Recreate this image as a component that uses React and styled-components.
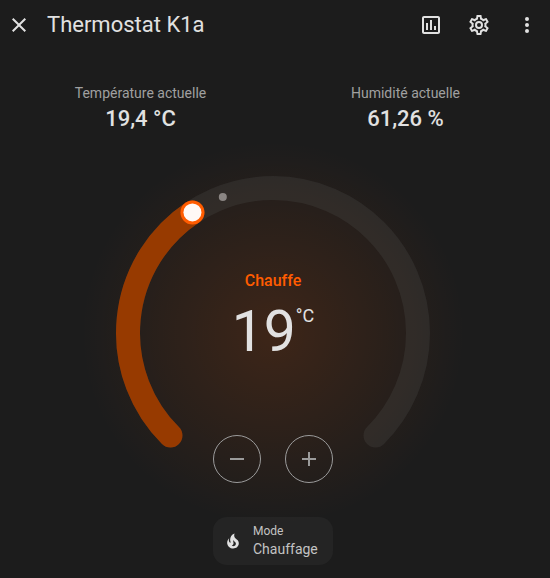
import React, { useState } from "react";
import styled, { createGlobalStyle } from "styled-components";

const GlobalStyle = createGlobalStyle`
  * { box-sizing: border-box; }
  body {
    margin: 0;
    background: #1c1c1c;
    color: #e1e1e1;
    font-family: Roboto, sans-serif;
    font-size: 14px;
  }
`;

const HEAT = "#ff5c00";

const ICONS = {
  close:
    "M19,6.41L17.59,5L12,10.59L6.41,5L5,6.41L10.59,12L5,17.59L6.41,19L12,13.41L17.59,19L19,17.59L13.41,12L19,6.41Z",
  chart:
    "M9 17H7V10H9V17M13 17H11V7H13V17M17 17H15V13H17V17M19 19H5V5H19V19.1M19 3H5C3.9 3 3 3.9 3 5V19C3 20.1 3.9 21 5 21H19C20.1 21 21 20.1 21 19V5C21 3.9 20.1 3 19 3Z",
  cog:
    "M12,8A4,4 0 0,1 16,12A4,4 0 0,1 12,16A4,4 0 0,1 8,12A4,4 0 0,1 12,8M12,10A2,2 0 0,0 10,12A2,2 0 0,0 12,14A2,2 0 0,0 14,12A2,2 0 0,0 12,10M10,22C9.75,22 9.54,21.82 9.5,21.58L9.13,18.93C8.5,18.68 7.96,18.34 7.44,17.94L4.95,18.95C4.73,19.03 4.46,18.95 4.34,18.73L2.34,15.27C2.21,15.05 2.27,14.78 2.46,14.63L4.57,12.97L4.5,12L4.57,11L2.46,9.37C2.27,9.22 2.21,8.95 2.34,8.73L4.34,5.27C4.46,5.05 4.73,4.96 4.95,5.05L7.44,6.05C7.96,5.66 8.5,5.32 9.13,5.07L9.5,2.42C9.54,2.18 9.75,2 10,2H14C14.25,2 14.46,2.18 14.5,2.42L14.87,5.07C15.5,5.32 16.04,5.66 16.56,6.05L19.05,5.05C19.27,4.96 19.54,5.05 19.66,5.27L21.66,8.73C21.79,8.95 21.73,9.22 21.54,9.37L19.43,11L19.5,12L19.43,13L21.54,14.63C21.73,14.78 21.79,15.05 21.66,15.27L19.66,18.73C19.54,18.95 19.27,19.04 19.05,18.95L16.56,17.95C16.04,18.34 15.5,18.68 14.87,18.93L14.5,21.58C14.46,21.82 14.25,22 14,22H10M11.25,4L10.88,6.61C9.68,6.86 8.62,7.5 7.85,8.39L5.44,7.35L4.69,8.65L6.8,10.2C6.4,11.37 6.4,12.64 6.8,13.8L4.68,15.36L5.43,16.66L7.86,15.62C8.63,16.5 9.68,17.14 10.87,17.38L11.24,20H12.76L13.13,17.39C14.32,17.14 15.37,16.5 16.14,15.62L18.57,16.66L19.32,15.36L17.2,13.81C17.6,12.64 17.6,11.37 17.2,10.2L19.31,8.65L18.56,7.35L16.15,8.39C15.38,7.5 14.32,6.86 13.12,6.62L12.75,4H11.25Z",
  dots:
    "M12,16A2,2 0 0,1 14,18A2,2 0 0,1 12,20A2,2 0 0,1 10,18A2,2 0 0,1 12,16M12,10A2,2 0 0,1 14,12A2,2 0 0,1 12,14A2,2 0 0,1 10,12A2,2 0 0,1 12,10M12,4A2,2 0 0,1 14,6A2,2 0 0,1 12,8A2,2 0 0,1 10,6A2,2 0 0,1 12,4Z",
  minus: "M19,13H5V11H19V13Z",
  plus: "M19,13H13V19H11V13H5V11H11V5H13V11H19V13Z",
  fire:
    "M17.66 11.2C17.43 10.9 17.15 10.64 16.89 10.38C16.22 9.78 15.46 9.35 14.82 8.72C13.33 7.26 13 4.85 13.95 3C13 3.23 12.17 3.75 11.46 4.32C8.87 6.4 7.85 10.07 9.07 13.22C9.11 13.32 9.15 13.42 9.15 13.55C9.15 13.77 9 13.97 8.8 14.05C8.57 14.15 8.33 14.09 8.14 13.93C8.08 13.88 8.04 13.83 8 13.76C6.87 12.33 6.69 10.28 7.45 8.64C5.78 10 4.87 12.3 5 14.47C5.06 14.97 5.12 15.47 5.29 15.97C5.43 16.57 5.7 17.17 6 17.7C7.08 19.43 8.95 20.67 10.96 20.92C13.1 21.19 15.39 20.8 17.03 19.32C18.86 17.66 19.5 15 18.56 12.72L18.43 12.46C18.22 12 17.66 11.2 17.66 11.2M14.5 17.5C14.22 17.74 13.76 18 13.4 18.1C12.28 18.5 11.16 17.94 10.5 17.28C11.69 17 12.4 16.12 12.61 15.23C12.78 14.43 12.46 13.77 12.33 13C12.21 12.26 12.23 11.63 12.5 10.94C12.69 11.32 12.89 11.7 13.13 12C13.9 13 15.11 13.44 15.37 14.8C15.41 14.94 15.43 15.08 15.43 15.23C15.46 16.05 15.1 16.95 14.5 17.5H14.5Z",
};

const Icon = ({ name, size = 24 }) => (
  <svg width={size} height={size} viewBox="0 0 24 24" fill="currentColor" aria-hidden="true">
    <path d={ICONS[name]} />
  </svg>
);

const Dialog = styled.main`
  display: flex;
  flex-direction: column;
  padding-right: 4px;
  overflow: hidden;
`;

const Header = styled.header`
  display: flex;
  align-items: center;
  height: 50px;
`;

const Title = styled.h1`
  flex: 1;
  margin: 0 0 0 9px;
  font-size: 22px;
  font-weight: 400;
  line-height: 28px;
`;

const IconButton = styled.button`
  display: grid;
  place-items: center;
  width: ${(p) => (p.$compact ? "38px" : "48px")};
  height: 48px;
  padding: 0;
  border: 0;
  background: none;
  color: inherit;
  cursor: pointer;
`;

const Actions = styled.div`
  display: flex;
  margin-right: -5px;
`;

const Readings = styled.dl`
  display: grid;
  grid-template-columns: 1fr 1fr;
  margin: 32px 8px 0;
  text-align: center;
`;

const Reading = styled.div`
  display: flex;
  flex-direction: column;
`;

const ReadingLabel = styled.dt`
  color: #a0a0a0;
  font-size: 14px;
  line-height: 22px;
`;

const ReadingValue = styled.dd`
  margin: 0;
  font-size: 22px;
  font-weight: 500;
  line-height: 30px;
`;

const Dial = styled.section`
  display: grid;
  align-self: center;
  width: 320px;
  margin-top: 39px;
  position: relative;
  isolation: isolate;

  &::before {
    content: "";
    position: absolute;
    z-index: -1;
    inset: -10%;
    background: radial-gradient(closest-side, ${HEAT}, transparent);
    opacity: 0.15;
    pointer-events: none;
  }
`;

const Ring = styled.svg`
  grid-area: 1 / 1;
  width: 100%;
  fill: none;
  stroke-linecap: round;
`;

const Arc = styled.path`
  stroke: ${(p) => p.$color};
  stroke-width: 24px;
`;

const HiddenSlider = styled.input`
  position: absolute;
  width: 1px;
  height: 1px;
  margin: 0;
  opacity: 0;
  pointer-events: none;
`;

const DialContent = styled.div`
  grid-area: 1 / 1;
  display: flex;
  flex-direction: column;
  align-items: center;
  padding: 98px 0 10px;
`;

const Action = styled.div`
  color: ${HEAT};
  font-size: 16px;
  font-weight: 500;
  line-height: 20px;
`;

const Target = styled.div`
  display: flex;
  margin-top: 9px;
  font-size: 57px;
  line-height: 64px;
`;

const Unit = styled.span`
  margin-top: 4px;
  font-size: 18px;
  line-height: 24px;
`;

const Steps = styled.div`
  display: flex;
  gap: 24px;
  margin-top: auto;
`;

const StepButton = styled.button`
  display: grid;
  place-items: center;
  width: 48px;
  height: 48px;
  padding: 0;
  border: 1px solid #9b9b9b;
  border-radius: 50%;
  background: none;
  color: #9b9b9b;
  cursor: pointer;
`;

const ModeCard = styled.label`
  display: flex;
  align-items: center;
  align-self: center;
  gap: 10px;
  height: 48px;
  margin-top: 24px;
  padding: 0 10px;
  border-radius: 14px;
  background: #242424;
`;

const ModeText = styled.span`
  display: flex;
  flex-direction: column;
`;

const ModeLabel = styled.span`
  color: #c3c3c3;
  font-size: 12px;
  line-height: 16px;
`;

const ModeSelect = styled.select`
  appearance: none;
  width: 70px;
  padding: 0;
  border: 0;
  background: none;
  color: #c3c3c3;
  font: 14px/20px Roboto, sans-serif;
  cursor: pointer;
`;

const MIN = 16;
const MAX = 24;
const RADIUS = 145;

// The dial sweeps 270° clockwise, from lower left to lower right.
const pointAt = (value) => {
  const angle = ((135 + ((value - MIN) / (MAX - MIN)) * 270) * Math.PI) / 180;
  return [160 + RADIUS * Math.cos(angle), 160 + RADIUS * Math.sin(angle)];
};

const arcTo = (value) => {
  const [x0, y0] = pointAt(MIN);
  const [x1, y1] = pointAt(value);
  const large = (value - MIN) / (MAX - MIN) > 2 / 3 ? 1 : 0;
  return `M${x0},${y0}A${RADIUS},${RADIUS} 0 ${large} 1 ${x1},${y1}`;
};

export default function App() {
  const [target, setTarget] = useState(19);
  const [mode, setMode] = useState("Chauffage");
  const [hx, hy] = pointAt(target);
  const [cx, cy] = pointAt(19.4);
  const step = (d) => setTarget((t) => Math.min(MAX, Math.max(MIN, t + d)));

  return (
    <Dialog>
      <GlobalStyle />
      <Header>
        <IconButton $compact aria-label="Fermer">
          <Icon name="close" />
        </IconButton>
        <Title>Thermostat K1a</Title>
        <Actions>
          <IconButton aria-label="Historique">
            <Icon name="chart" />
          </IconButton>
          <IconButton aria-label="Paramètres">
            <Icon name="cog" />
          </IconButton>
          <IconButton aria-label="Plus d'options">
            <Icon name="dots" />
          </IconButton>
        </Actions>
      </Header>

      <Readings>
        <Reading>
          <ReadingLabel>Température actuelle</ReadingLabel>
          <ReadingValue>19,4 °C</ReadingValue>
        </Reading>
        <Reading>
          <ReadingLabel>Humidité actuelle</ReadingLabel>
          <ReadingValue>61,26 %</ReadingValue>
        </Reading>
      </Readings>

      <Dial>
        <Ring viewBox="0 0 320 320" aria-hidden="true">
          <Arc $color="rgba(111, 111, 111, 0.16)" d={arcTo(MAX)} />
          <Arc $color="#973a00" d={arcTo(target)} />
          <circle cx={cx} cy={cy} r="4" fill="#8a8583" />
          <circle cx={hx} cy={hy} r="12" fill={HEAT} />
          <circle cx={hx} cy={hy} r="9" fill="#fff9f6" />
        </Ring>
        <HiddenSlider
          type="range"
          aria-label="Température cible"
          min={MIN}
          max={MAX}
          value={target}
          onChange={(e) => setTarget(Number(e.target.value))}
        />
        <DialContent>
          <Action>Chauffe</Action>
          <Target>
            {target}
            <Unit>°C</Unit>
          </Target>
          <Steps>
            <StepButton aria-label="Diminuer" onClick={() => step(-1)}>
              <Icon name="minus" />
            </StepButton>
            <StepButton aria-label="Augmenter" onClick={() => step(1)}>
              <Icon name="plus" />
            </StepButton>
          </Steps>
        </DialContent>
      </Dial>

      <ModeCard>
        <Icon name="fire" size={20} />
        <ModeText>
          <ModeLabel>Mode</ModeLabel>
          <ModeSelect value={mode} onChange={(e) => setMode(e.target.value)}>
            <option>Chauffage</option>
            <option>Arrêt</option>
          </ModeSelect>
        </ModeText>
      </ModeCard>
    </Dialog>
  );
}
